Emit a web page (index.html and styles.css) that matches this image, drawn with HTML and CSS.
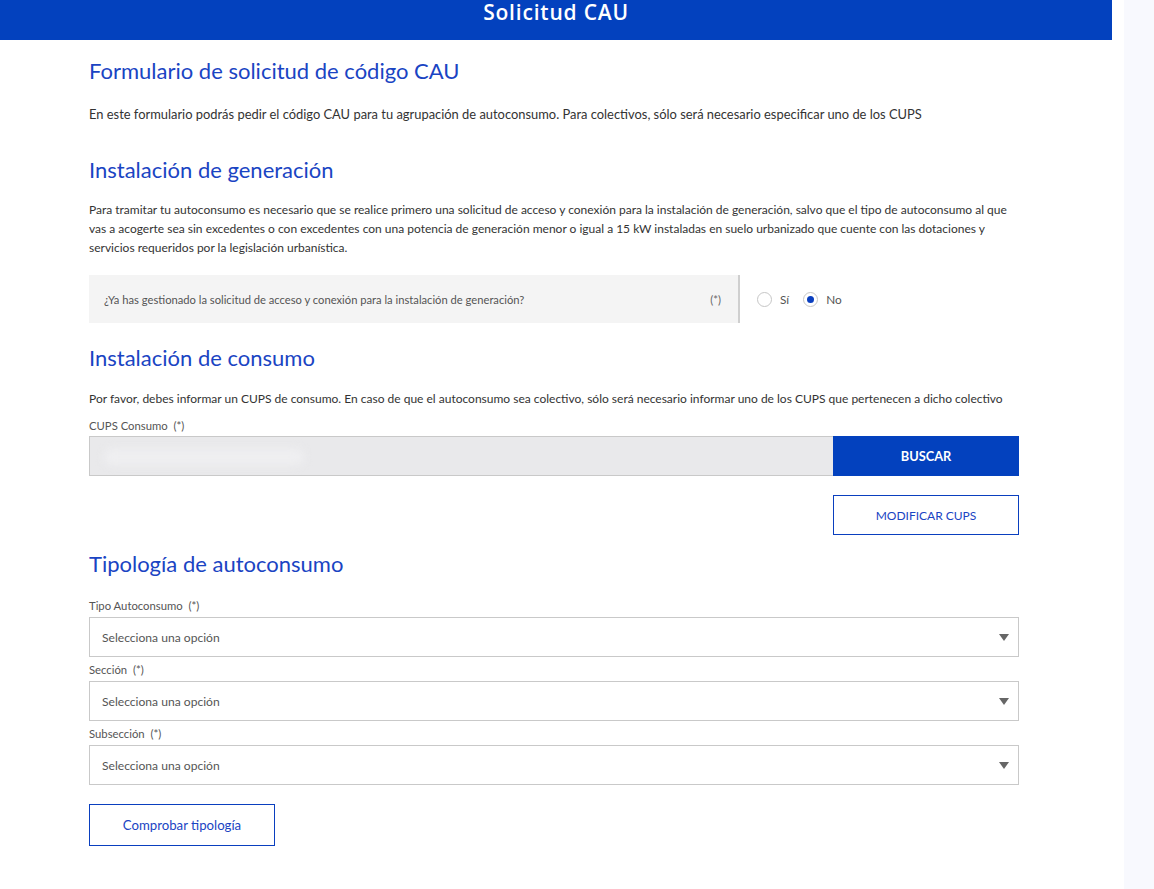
FILE: index.html
```html
<!DOCTYPE html>
<html lang="es">
<head>
<meta charset="utf-8">
<title>Solicitud CAU</title>
<link rel="stylesheet" href="styles.css">
</head>
<body>
<div class="page">
  <div class="main">
    <header class="topbar"><h1 class="topbar-title">Solicitud CAU</h1></header>
    <div class="content">
      <h2 class="section-title first">Formulario de solicitud de código CAU</h2>
      <p class="text intro">En este formulario podrás pedir el código CAU para tu agrupación de autoconsumo. Para colectivos, sólo será necesario especificar uno de los CUPS</p>

      <h2 class="section-title">Instalación de generación</h2>
      <p class="text gen">Para tramitar tu autoconsumo es necesario que se realice primero una solicitud de acceso y conexión para la instalación de generación, salvo que el tipo de autoconsumo al que vas a acogerte sea sin excedentes o con excedentes con una potencia de generación menor o igual a 15 kW instaladas en suelo urbanizado que cuente con las dotaciones y servicios requeridos por la legislación urbanística.</p>

      <div class="question-row">
        <div class="question-box">
          <span class="question-text">¿Ya has gestionado la solicitud de acceso y conexión para la instalación de generación?</span>
          <span class="req">(*)</span>
        </div>
        <div class="radios">
          <label class="radio"><span class="radio-dot"></span><span>Sí</span></label>
          <label class="radio"><span class="radio-dot checked"></span><span>No</span></label>
        </div>
      </div>

      <h2 class="section-title consumo-title">Instalación de consumo</h2>
      <p class="text consumo">Por favor, debes informar un CUPS de consumo. En caso de que el autoconsumo sea colectivo, sólo será necesario informar uno de los CUPS que pertenecen a dicho colectivo</p>
      <div class="field-label cups">CUPS Consumo&nbsp; (*)</div>
      <div class="search-row">
        <div class="cups-input"><span class="blur"></span></div>
        <button class="btn-primary">BUSCAR</button>
      </div>
      <div class="modify-row">
        <button class="btn-outline wide">MODIFICAR CUPS</button>
      </div>

      <h2 class="section-title tipologia">Tipología de autoconsumo</h2>
      <div class="field-label first-label">Tipo Autoconsumo&nbsp; (*)</div>
      <div class="select"><span>Selecciona una opción</span><span class="caret"></span></div>
      <div class="field-label">Sección&nbsp; (*)</div>
      <div class="select"><span>Selecciona una opción</span><span class="caret"></span></div>
      <div class="field-label">Subsección&nbsp; (*)</div>
      <div class="select"><span>Selecciona una opción</span><span class="caret"></span></div>
      <button class="btn-outline check">Comprobar tipología</button>
    </div>
  </div>
  <aside class="side"></aside>
</div>
</body>
</html>
```

FILE: styles.css
```css
* { box-sizing: border-box; }
html, body { margin: 0; padding: 0; }
body {
  font-family: Lato, "Open Sans", sans-serif;
  color: #333;
  background: #fff;
}
.page {
  display: flex;
  min-height: 889px;
  gap: 12px;
}
.main {
  width: 1112px;
  flex: none;
}
.side {
  flex: 1;
  background: #f8f9fe;
}
.topbar {
  background: #0341be;
  height: 40px;
  display: flex;
  justify-content: center;
  align-items: flex-start;
}
.topbar-title {
  margin: 0;
  color: #fff;
  font-family: "Open Sans", sans-serif;
  font-size: 21px;
  font-weight: 600;
  line-height: 24px;
  letter-spacing: 0.8px;
}
.content {
  padding: 17px 93px 40px 89px;
}
.section-title {
  margin: 0;
  font-size: 22px;
  font-weight: 400;
  color: #1a44c3;
  line-height: 28px;
  margin-top: 20px;
}
.section-title.first { margin-top: 0; }
.section-title.consumo-title { margin-top: 21px; }
.section-title.tipologia { margin-top: 15px; }
.text {
  margin: 16px 0 0;
  font-size: 12px;
  line-height: 19px;
  color: #333;
}
.text.intro { margin: 20px 0 32px; font-size: 12.9px; }
.text.consumo { margin-top: 17px; }
.question-row {
  display: flex;
  align-items: center;
  margin-top: 18px;
}
.question-box {
  width: 651px;
  height: 48px;
  background: #f4f4f4;
  border-right: 2px solid #cfcfcf;
  display: flex;
  align-items: center;
  justify-content: space-between;
  padding: 0 17px 0 15px;
  font-size: 11.2px;
  color: #555;
}
.req { color: #666; }
.radios {
  display: flex;
  gap: 14px;
  margin-left: 17px;
}
.radio {
  display: flex;
  align-items: center;
  gap: 8px;
  font-size: 11.8px;
  color: #555;
}
.radio-dot {
  width: 15px;
  height: 15px;
  border-radius: 50%;
  border: 1px solid #c6c6c6;
  background: #fff;
  display: inline-block;
  position: relative;
}
.radio-dot.checked::after {
  content: "";
  position: absolute;
  left: 3px;
  top: 3px;
  width: 7px;
  height: 7px;
  border-radius: 50%;
  background: #0a3fbf;
}
.field-label {
  font-size: 11.3px;
  color: #555;
  margin-top: 5px;
  line-height: 16px;
  margin-bottom: 3px;
}
.field-label.cups { margin-top: 10px; margin-bottom: 2px; }
.field-label.first-label { margin-top: 20px; }
.search-row {
  display: flex;
  height: 40px;
}
.cups-input {
  flex: 1;
  background: #e9e9eb;
  border: 1px solid #c9c9c9;
  border-right: none;
  position: relative;
  overflow: hidden;
}
.blur {
  position: absolute;
  left: 14px;
  top: 12px;
  width: 200px;
  height: 16px;
  background: #efeff1;
  filter: blur(4px);
  border-radius: 8px;
}
.btn-primary {
  width: 186px;
  border: none;
  background: #0341be;
  color: #fff;
  font-family: inherit;
  font-size: 12.8px;
  font-weight: 700;
}
.modify-row {
  display: flex;
  justify-content: flex-end;
  margin-top: 19px;
}
.btn-outline {
  background: #fff;
  border: 1px solid #0a3fbf;
  color: #1a44c3;
  font-family: inherit;
  font-size: 13.2px;
  height: 40px;
}
.btn-outline.wide { width: 186px; font-size: 12px; }
.btn-outline.check {
  width: 186px;
  height: 42px;
  margin-top: 19px;
}
.select {
  height: 40px;
  border: 1px solid #c9c9c9;
  display: flex;
  align-items: center;
  justify-content: space-between;
  padding: 0 9px 0 12px;
  font-size: 12.1px;
  color: #555;
}
.caret {
  width: 0;
  height: 0;
  border-left: 5.5px solid transparent;
  border-right: 5.5px solid transparent;
  border-top: 7px solid #666;
}
```
